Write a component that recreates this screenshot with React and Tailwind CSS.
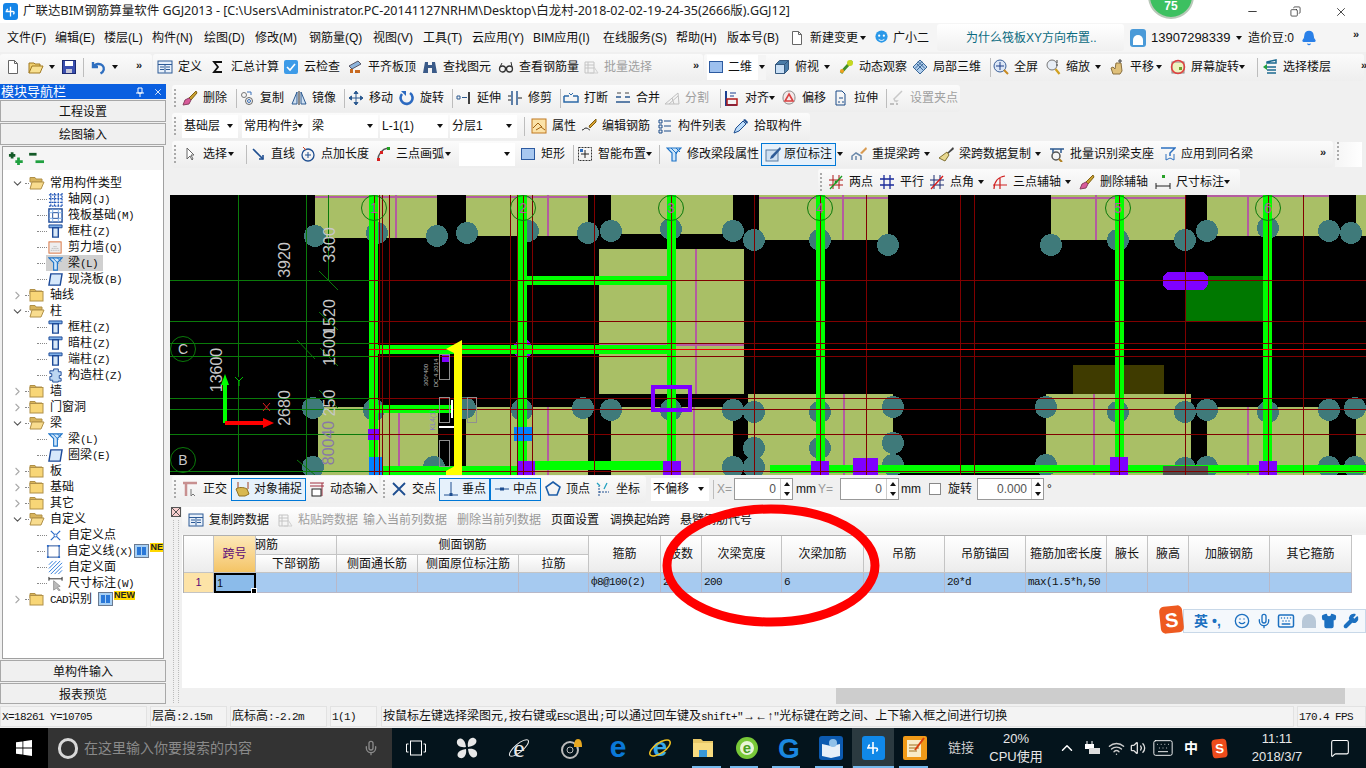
import React from 'react';
import clsx from 'clsx';
import { Bell, Mic, Wifi, Volume2, ChevronUp, ChevronDown, ChevronRight, MessageSquare, Keyboard, Shirt, Wrench, Smile, X, Minus, Copy } from 'lucide-react';

const B = '#2458b8', LB = '#7fb0e8';

const ICONS = {
  doc: <><path d="M3.5 1.5h6l3 3v10h-9z" fill="#fff" stroke="#666" /><path d="M9.5 1.5v3h3" stroke="#666" /></>,
  open: <><path d="M1 14V4h5l1 1h5v2" fill="#f0d070" stroke="#a07820" /><path d="M1 14l3-7h11l-3 7z" fill="#f8e090" stroke="#a07820" /></>,
  save: <><rect x="1.5" y="1.5" width="13" height="13" fill="#3a4fb0" stroke="#1c2a70" /><rect x="4" y="2" width="8" height="5" fill="#fff" /><rect x="5" y="10" width="6" height="4" fill="#c8c8d8" /></>,
  undo: <path d="M3 3v5h5M3.5 8C5 4.5 10 4 12.5 6.5s1.5 6-2 8" stroke="#2f6fc0" strokeWidth="2.4" />,
  define: <><rect x="1" y="2" width="14" height="12" fill="#e8f0fa" stroke="#2c5a96" /><path d="M1 5.5h14M3 8h4M3 10.5h4M9 8h4M9 10.5h4M8 5.5v8" stroke="#2c5a96" /></>,
  sigma: <path d="M12 3H4l4 5-4 5h8" stroke="#111" strokeWidth="1.8" />,
  cloud: <><rect x="1" y="1" width="14" height="14" rx="2" fill="#3d9be8" /><path d="M4 8l3 3 5-6" stroke="#fff" strokeWidth="1.6" /></>,
  plate: <><path d="M2 7l9-5 3 3-9 5z" fill="#8db4dc" stroke="#556" /><path d="M3 14h3v-4H3zM8 14h5v-3H8z" fill="#c86a20" /></>,
  binoc: <><path d="M3 3h3v3h4V3h3l2 11h-5V9H6v5H1z" fill="#3a5a88" /></>,
  glass: <><circle cx="4.5" cy="10" r="3" stroke="#333" strokeWidth="1.3" /><circle cx="11.5" cy="10" r="3" stroke="#333" strokeWidth="1.3" /><path d="M7 9h2M2 8l2-4M14 8l-1-5" stroke="#333" /></>,
  batch: <><path d="M2 3h9v11H2zM2 6h9M2 9h9M5 3v11" stroke="#c4c4c4" /><path d="M11 8l4 6H7" stroke="#d0d0d0" /></>,
  square: <rect x="1.5" y="2.5" width="13" height="11" fill="#9dc0ee" stroke="#2c5aa0" />,
  cube: <><path d="M1.5 5.5h9v9h-9z" fill="#c9dff5" stroke="#35597f" /><path d="M1.5 5.5l4-4h9l-4 4zM10.5 5.5l4-4v9l-4 4z" fill="#4a7ca8" stroke="#35597f" /></>,
  orbit: <><path d="M3 14C6 10 10 6 14 2" stroke="#3f8f28" strokeWidth="3" /><circle cx="12" cy="4" r="3" fill="#c6d820" /><circle cx="4" cy="12" r="2" fill="#f0a020" /></>,
  cube3: <path d="M8 1l7 7-7 7-7-7zM4 4l8 8M12 4l-8 8M6 2.500l7 7M10 2.500l-7 7" fill="#b0cdec" stroke="#3a6898" />,
  full: <><circle cx="7" cy="7" r="6" fill="#dbe6f6" stroke="#3a5f98" /><path d="M7 3v8M3 7h8" stroke="#1e3f88" /><path d="M11 11l4 4" stroke="#c88a20" strokeWidth="2" /></>,
  zoom: <><circle cx="7" cy="6" r="5" fill="#e8eef6" stroke="#777" /><path d="M10.500 10l4 5" stroke="#d0a020" strokeWidth="2.200" /><path d="M12 1v3M12 5v2" stroke="#444" /></>,
  pan: <><path d="M4 15l-2-6 2-1 2 2 1-6h5l1 8-2 3z" fill="#dfc07a" stroke="#8a7040" /><path d="M11 0v4M9 2h4" stroke="#444" /></>,
  rot: <><rect x="2" y="3" width="12" height="11" fill="#eef3c0" stroke="#888" /><circle cx="8" cy="8" r="6.500" stroke="#e04040" strokeWidth="1.500" /><rect x="9" y="8" width="3" height="3" fill="#70a030" /></>,
  layers: <><path d="M5 3l9-2v3H5zM5 8h9M5 11h9M5 14h9" stroke="#1c6a90" strokeWidth="1.500" /><path d="M1 8l4-3v6z" fill="#20a040" /></>,
  erase: <><path d="M14 1L7 8l2 2 6-7z" fill="#c8a030" stroke="#806010" /><path d="M7 8l-4 2-2 5 6-1 2-4z" fill="#d85a9a" stroke="#884060" /></>,
  copy: <><circle cx="5" cy="5" r="2.500" stroke="#777" /><circle cx="10" cy="11" r="3.500" stroke="#666" /><circle cx="10" cy="11" r="1.500" stroke="#3a70b8" /><path d="M8 2h4v3" stroke="#3a70b8" /></>,
  mirror: <><path d="M6 2L1 14h5zM10 2l5 12h-5z" stroke="#2c5a90" fill="#cfe0f2" /><path d="M8 1v14" stroke="#222" /></>,
  move: <path d="M8 1v14M1 8h14M8 1L6 3.500h4zM8 15l-2-2.500h4zM1 8l2.500-2v4zM15 8l-2.500-2v4z" stroke="#2c5a90" fill="#2c5a90" />,
  rotate: <><path d="M3 4a6 6 0 1 0 8-1" stroke="#2c6ac0" strokeWidth="2.600" /><path d="M2 1h5v5" fill="#2c6ac0" /></>,
  extend: <><path d="M1 6h3v3H1zM6 7.500h5" stroke="#2c5a90" /><path d="M13 2v12" stroke="#111" strokeWidth="1.600" /></>,
  trim: <><path d="M5 1v14M10 1v14" stroke="#2c5a90" strokeWidth="1.500" /><path d="M1 6h3M1 10h3M11 8h4" stroke="#222" /></>,
  brk: <><path d="M1 6h5M10 6h5M1 6v6h14V6" stroke="#2c6aa8" strokeWidth="1.500" /><path d="M6 3l2 2 2-2" stroke="#2c6aa8" /></>,
  merge: <><path d="M1 12h14M1 7h5M10 7h5" stroke="#2c5a90" strokeWidth="1.500" /><path d="M2 3h4M10 3h4" stroke="#444" /></>,
  split: <path d="M1 14h14L14 3zM5 14L14 6M8 8l2 6" stroke="#c0c0c0" />,
  align: <><path d="M2 1v14h11" stroke="#1a3f90" strokeWidth="2" /><rect x="3" y="9" width="10" height="6" stroke="#b01818" strokeWidth="1.500" /><path d="M6 3h6M6 6h4" stroke="#1a3f90" /></>,
  offset: <><path d="M8 1C4 1 2 4 2 8c0 4 3 6 6 6s6-2 6-6c0-4-2-7-6-7z" fill="#f4e8e8" stroke="#888" /><path d="M8 4l4 7H4z" stroke="#d84040" strokeWidth="1.600" /></>,
  stretch: <path d="M3 1h6l3 3v11H3zM5 12h2M9 12h2M6 8h4" stroke="#1a4a88" />,
  pin: <><path d="M13 1l-7 7-1 1 1 2h2l-1 1" stroke="#c8c8c8" strokeWidth="1.500" /><path d="M1 14h4M7 14h2" stroke="#c0c0c0" strokeWidth="2" /></>,
  attr: <><rect x="1" y="1" width="14" height="14" fill="#fbe2a8" stroke="#c07820" /><path d="M2 10l5-5 4 4M5 12l5-3 4 3" stroke="#a06010" /></>,
  edit: <><path d="M1 12c2 0 2-2 4-2s3 2 4 2" stroke="#222" /><path d="M15 1L8 8l1 2 6-6z" fill="#d8a030" stroke="#806010" /></>,
  list: <path d="M2 2h3v3H2zM2 7h3v3H2zM2 12h3v3H2zM7 3h7M7 8h7M7 13h7" stroke="#1a4a88" />,
  picker: <><path d="M1 15l2-5 7-7 3 3-7 7z" fill="#bcdcfa" stroke="#1e4e90" /><path d="M10 2l2-1 3 3-1 2z" fill="#1e4e90" /></>,
  cursor: <path d="M5 2v11l3-3 2 4 1-1-2-4h3z" fill="#fff" stroke="#666" />,
  line: <><path d="M3 3l10 10" stroke="#1e4e90" strokeWidth="1.600" /><path d="M9 13h4V9" stroke="#1e4e90" strokeWidth="1.600" /></>,
  plen: <><circle cx="8" cy="9" r="6" stroke="#1e4e90" strokeWidth="1.300" /><path d="M8 6v6M5 9h6" stroke="#1e4e90" /><path d="M3 1l3 3" stroke="#d04020" /></>,
  arc: <><path d="M3 14C3 8 7 3 13 2" stroke="#555" strokeWidth="1.500" /><rect x="2" y="12" width="3" height="3" fill="#d82020" /><rect x="5" y="5" width="3" height="3" fill="#d82020" /><rect x="12" y="1" width="3" height="3" fill="#20a020" /></>,
  rect: <rect x="1.500" y="2.500" width="13" height="11" fill="#a8c8f0" stroke="#2c5aa0" />,
  smart: <><rect x="1.500" y="1.500" width="13" height="13" stroke="#333" strokeDasharray="2 1" /><path d="M8 4v8M4 8h8" stroke="#222" /><rect x="3" y="3" width="3" height="3" fill="#3070c0" /></>,
  beam: <><path d="M1 2h14l-5 5v8H6V7z" fill="#cfe6fa" stroke="#1e74c8" strokeWidth="1.200" /><path d="M5 2l6 6M10 2l4 4" stroke="#1e74c8" /></>,
  inplace: <><rect x="1" y="4" width="12" height="11" fill="#cfe0f2" stroke="#5a7ca0" /><path d="M15 1L6 10l-1 3 3-1 8-9z" fill="#2f5c98" /></>,
  respan: <><path d="M1 14v-4l4-3 5 3v4M5 14v-4M10 14v-3" stroke="#6a88aa" strokeWidth="1.500" /><path d="M15 1l-6 6 2 1 5-5z" fill="#d89a50" /></>,
  broom: <><path d="M15 1L9 7l1 1 6-5z" fill="#444" /><path d="M9 6l2 3-4 6-6-3z" fill="#e8d890" stroke="#807030" /></>,
  ident: <><path d="M1 3h14M4 3v4M12 3v4" stroke="#2c5a90" strokeWidth="1.500" /><circle cx="7" cy="10" r="4" stroke="#555" strokeWidth="1.500" /><path d="M10 13l3 3" stroke="#b08020" strokeWidth="2" /></>,
  apply: <><path d="M1 2h14l-5 5v3" stroke="#2c70c0" strokeWidth="1.500" /><path d="M6 8v6l4-2 4 2V8" stroke="#2c70c0" /></>,
  two: <><path d="M1 6h14M1 11h14M5 1v14M11 1v14" stroke="#b01818" /><path d="M2 15L14 2" stroke="#1a9a20" strokeWidth="1.300" /><circle cx="8" cy="8" r="1.500" fill="#1a9a20" /></>,
  para: <path d="M1 5h14M1 11h14M5 1v14M11 1v14" stroke="#1a2a9a" strokeWidth="1.300" />,
  angle: <><path d="M1 6h14M1 11h14M5 1v14M11 1v14" stroke="#1a2a70" /><path d="M2 15L14 2" stroke="#d81818" strokeWidth="1.300" /></>,
  arcaux: <><path d="M2 15C2 8 6 3 13 2M1 11h14M8 4v11" stroke="#d02020" strokeWidth="1.200" /></>,
  dim: <><path d="M1 12h14M1 9v6M15 9v6" stroke="#222" /><rect x="7" y="1" width="3" height="3" fill="#28a028" /></>,
  ortho: <><path d="M1 2h14M4 2v13" stroke="#c89090" strokeWidth="2.500" /><path d="M9 8v7l2-2 2 2" stroke="#777" /></>,
  snap: <><path d="M3 1v7M13 1v7" stroke="#a04020" /><path d="M1 8c2-2 8-2 11 0l2 5-4 2H4z" fill="#d8b850" stroke="#907020" /></>,
  dyn: <><path d="M1 2h14M1 5h14M13 2v13" stroke="#a03040" /><rect x="3" y="8" width="9" height="7" fill="#fff" stroke="#222" /></>,
  inter: <path d="M2 2l12 12M14 2L2 14" stroke="#1e4e90" strokeWidth="1.800" />,
  perp: <><path d="M8 1v12M1 14h14" stroke="#1e4e90" /><rect x="6.500" y="12" width="3" height="3" fill="#1e4e90" /></>,
  mid: <><path d="M1 8h14" stroke="#1e4e90" /><rect x="6" y="6.500" width="4" height="3" fill="#1e4e90" /></>,
  vertex: <path d="M8 1l7 5-3 8H4L1 6z" stroke="#1e5ea8" strokeWidth="1.600" />,
  coord: <><path d="M4 15V5M4 11h10" stroke="#1e4e90" strokeDasharray="2 1" /><path d="M2 2l3 3M12 2L9 8" stroke="#20a0c0" strokeWidth="1.300" /></>,
};

const I = ({ n, cls = 'w-4 h-4' }) => <svg viewBox="0 0 16 16" fill="none" className={clsx(cls, 'shrink-0')}>{ICONS[n]}</svg>;
const Arrow = ({ cls }) => <svg viewBox="0 0 6 4" className={clsx('w-[6px] h-[4px] shrink-0', cls)}><path d="M0 0h6L3 4z" fill="#111" /></svg>;
const Sep = ({ w }) => <div className={clsx('flex items-center justify-center h-full shrink-0', w)}><div className="w-px h-[19px] bg-[#bdbdbd]" /></div>;
const Grip = () => <div className="w-[6px] h-[18px] ml-[2px] mr-[2px] shrink-0 border-l-2 border-dotted border-[#aaa]" />;
const More = ({ cls }) => <span className={clsx('text-[11px] leading-none font-bold text-[#222] self-start mt-[6px]', cls)}>»</span>;

// 一个工具按钮：宽度写死，图标后跟文字
const T = ({ i, t, w, a, g, on, pl = '' }) => (
  <div className={clsx('flex items-center h-full shrink-0', w, pl, g ? 'text-[#a0a0a0]' : 'text-[#111]')}>
    {on ? (
      <div className="flex items-center h-[23px] border border-[#0078d7] bg-[#e6f1fb] pl-[3px] pr-[3px]">
        <I n={i} /><span className="ml-[3px]">{t}</span>
      </div>
    ) : (
      <>{i && <I n={i} />}<span className="ml-[5px] whitespace-nowrap">{t}</span></>
    )}
    {a && <Arrow cls="ml-auto mr-[8px]" />}
  </div>
);

const Bar = ({ cls, children }) => <div className={clsx('flex items-center h-[27px] rounded-[3px] bg-gradient-to-b from-[#fbfbfb] to-[#eeeeee]', cls)}>{children}</div>;

const Combo = ({ t, w, ml = 'ml-[4px]' }) => (
  <div className={clsx('flex items-center justify-between h-[23px] bg-white pl-[2px] pr-[5px] shrink-0', w, ml)}>
    <span className="whitespace-nowrap overflow-hidden">{t}</span><Arrow />
  </div>
);

const Mono = ({ t, cls }) => (
  <span className={cls}>
    {t.split(/([\x00-\x7f]+)/).map((s, k) => (/[\x00-\x7f]/.test(s)
      ? <span key={k} className="text-[11px] tracking-[-0.6px] font-['Liberation_Mono',monospace]">{s}</span>
      : <span key={k}>{s}</span>))}
  </span>
);

const menus = [
  ['文件(F)', 'w-[48px]'], ['编辑(E)', 'w-[49px]'], ['楼层(L)', 'w-[48px]'], ['构件(N)', 'w-[52px]'], ['绘图(D)', 'w-[51px]'], ['修改(M)', 'w-[54px]'],
  ['钢筋量(Q)', 'w-[64px]'], ['视图(V)', 'w-[50px]'], ['工具(T)', 'w-[49px]'], ['云应用(Y)', 'w-[61px]'], ['BIM应用(I)', 'w-[70px]'], ['在线服务(S)', 'w-[73px]'], ['帮助(H)', 'w-[51px]'], ['版本号(B)', 'w-[62px]'],
];

const tree = [
  [0, 'open', '常用构件类型'], [1, 'grid', '轴网(J)'], [1, 'raft', '筏板基础(M)'], [1, 'col', '框柱(Z)'], [1, 'wall', '剪力墙(Q)'], [1, 'beam', '梁(L)', 'sel'], [1, 'slab', '现浇板(B)'],
  [0, 'closed', '轴线'], [0, 'open', '柱'], [1, 'col', '框柱(Z)'], [1, 'col', '暗柱(Z)'], [1, 'col', '端柱(Z)'], [1, 'gzz', '构造柱(Z)'],
  [0, 'closed', '墙'], [0, 'closed', '门窗洞'], [0, 'open', '梁'], [1, 'beam', '梁(L)'], [1, 'slab', '圈梁(E)'],
  [0, 'closed', '板'], [0, 'closed', '基础'], [0, 'closed', '其它'], [0, 'open', '自定义'], [1, 'xpt', '自定义点'], [1, 'xline', '自定义线(X)', 'new'], [1, 'hatch', '自定义面'], [1, 'dimc', '尺寸标注(W)'],
  [0, 'closed', 'CAD识别', 'new2'],
];

const TREE_ICONS = {
  grid: <path d="M1 3h14M1 7h14M1 11h14M1 15h14M3 1v14M7 1v14M11 1v14M15 1v14" stroke={B} strokeWidth="1.300" strokeDasharray="2 1" />,
  raft: <><rect x="1" y="1" width="14" height="14" stroke="#1d4a98" strokeWidth="1.500" /><rect x="5" y="5" width="6" height="6" stroke="#1d4a98" /><path d="M1 5h4M1 11h4M11 5h4M11 11h4M5 1v4M11 1v4M5 11v4M11 11v4" stroke={LB} /></>,
  col: <><path d="M1 1h14v3H1z" fill={LB} stroke="#1d4a98" /><path d="M5 4h6v10H5z" fill="#d8e8f8" stroke="#1d4a98" strokeWidth="1.500" /></>,
  wall: <><rect x="1" y="2" width="13" height="12" fill="#eee" stroke="#d8703a" /><path d="M3 11h9M4 9h7M6 7h4" stroke="#aaa" strokeDasharray="1 1" /></>,
  beam: ICONS.beam,
  slab: <path d="M3 2h12l-2 12H1z" fill="#d6e8fa" stroke="#1d4a98" strokeWidth="1.500" />,
  gzz: <path d="M6 1h5v3h3v4h-2v3h2v3h-3v1H5v-2H2V9h2V6H2V3h4z" fill="#bcd6f2" stroke="#1d4a98" />,
  xpt: <><path d="M3 3l10 10M13 3L3 13" stroke="#2a6ac8" strokeWidth="1.300" /><circle cx="8" cy="8" r="1.500" fill="#fff" stroke="#2a6ac8" /></>,
  xline: <><rect x="2" y="2" width="12" height="12" stroke="#1d4a98" /><path d="M1 1h2v2H1zM13 1h2v2h-2zM1 13h2v2H1zM13 13h2v2h-2z" fill="#2a6ac8" /></>,
  hatch: <path d="M1 5l4-4M1 9l8-8M1 13L13 1M3 15L15 3M7 15l8-8M11 15l4-4" stroke="#2a78d8" />,
  dimc: <><path d="M1 3h14M1 1v4M15 1v4" stroke="#222" /><path d="M6 5v10l3-2 3 3 1-1-3-3 3-1z" fill="#bbb" stroke="#999" /></>,
};

const Folder = ({ open }) => (
  <svg viewBox="0 0 16 14" className="w-[16px] h-[14px] shrink-0" fill="none">
    <path d="M1 3V1.500h5L7 3h6v3H1z" fill="#d8b45c" stroke="#b09048" />
    {open ? <path d="M3 6h12l-3 7H1z" fill="#f8dc8e" stroke="#b09048" /> : <rect x="1" y="3.500" width="13" height="9.500" fill="#f8d677" stroke="#b09048" />}
  </svg>
);

const NewTag = ({ t }) => (
  <span className="flex items-start ml-[2px]">
    <span className="w-[15px] h-[14px] border border-[#6a7a90] bg-[#a8d0f4] grid grid-cols-2 gap-[1px] p-[2px]"><i className="bg-[#2a78d8]" /><i className="bg-[#2a78d8]" /></span>
    <span className="bg-[#ffd800] text-[9px] leading-[9px] font-bold text-[#222] font-['Liberation_Sans',sans-serif] ml-[1px] -mt-[1px] overflow-hidden">{t}</span>
  </span>
);

const TreeRow = ({ r }) => {
  const [lv, ic, t, ex] = r;
  const open = ic === 'open';
  if (lv === 0) return (
    <div className="relative flex items-center h-[16px] pl-[8px]">
      {open ? <ChevronDown size={13} className="text-[#555] shrink-0" /> : <ChevronRight size={13} className="text-[#aaa] shrink-0" />}
      <div className="w-[4px] ml-[1px] border-t border-dotted border-[#888]" />
      <Folder open={open} />
      <Mono t={t} cls="ml-[5px] whitespace-nowrap" />
      {ex === 'new2' && <span className="ml-[4px] -mt-[1px]"><NewTag t="NEW" /></span>}
    </div>
  );
  return (
    <div className="relative flex items-center h-[16px] pl-[34px]">
      <div className="w-[10px] border-t border-dotted border-[#888] mr-[1px]" />
      <svg viewBox="0 0 16 16" fill="none" className="w-[15px] h-[15px] shrink-0 relative z-10">{TREE_ICONS[ic]}</svg>
      <Mono t={t} cls={clsx('ml-[5px] whitespace-nowrap relative z-10')} />
      {ex === 'sel' && <div className="absolute left-[43px] w-[57px] h-[16px] bg-[#d0d0d0]" />}
      {ex === 'new' && <NewTag t="NE" />}
    </div>
  );
};

const plates = [
  [145, 0, 122, 43], [296, 0, 122, 41], [441, 0, 122, 39], [589, 0, 129, 45], [881, 0, 135, 45], [1037, 0, 122, 41], [1186, 0, 10, 41],
  [429, 54, 145, 145], [148, 212, 120, 68], [296, 212, 122, 68], [441, 212, 122, 68], [578, 199, 145, 81], [876, 199, 145, 81], [1037, 212, 122, 68], [1186, 212, 10, 68],
];
const dots = [
  [145, 41], [207, 38], [267, 41], [297, 38], [358, 36], [418, 38], [441, 36], [501, 34], [563, 36], [584, 45], [650, 45], [718, 50], [881, 50], [948, 45], [1015, 45], [1037, 36], [1098, 33], [1159, 36], [1181, 38],
  [143, 213], [204, 215], [295, 213], [352, 215], [413, 213], [441, 215], [501, 215], [563, 215], [584, 217], [584, 253], [143, 272], [264, 272], [563, 272], [584, 272], [650, 217], [723, 212], [876, 212], [948, 217], [1015, 217], [1037, 215], [1098, 217], [1159, 215], [1185, 213], [650, 253], [723, 248], [723, 270], [876, 270], [1015, 273], [1037, 272], [1159, 272], [1185, 272],
];
const pinks = [[226, 0, 226, 43], [378, 0, 378, 41], [526, 54, 526, 199], [229, 212, 229, 280], [378, 212, 378, 280], [524, 212, 524, 280], [673, 0, 673, 45], [926, 0, 926, 45], [1078, 0, 1078, 41], [674, 199, 674, 280], [924, 199, 924, 280], [1078, 212, 1078, 280], [429, 150, 574, 150], [145, 2, 267, 2], [296, 2, 418, 2], [589, 3, 718, 3], [881, 3, 1016, 3], [1037, 1, 1159, 1]];
const hRed = [85, 126, 148, 161, 203, 214, 239, 276];
const vRed = [204, 209, 212, 219, 340, 347, 353, 362, 424, 501, 584, 650, 696, 790, 804, 949, 1015, 1098, 1133];
const bubbles = [[204, '1'], [353, '2'], [501, '3'], [650, '4'], [948, '5'], [1098, '6']];
const nums = [['3920', 114, 65], ['3300', 159, 50], ['1520', 159, 122], ['1500', 159, 153], ['250', 159, 208], ['2680', 114, 213], ['13600', 46, 175]];
const blocks = [[198, 234, 11, 11, '#7f00ff'], [344, 232, 18, 14, '#0080ff'], [199, 262, 13, 18, '#0080ff'], [347, 266, 18, 14, '#7f00ff'], [493, 266, 18, 14, '#7f00ff'], [641, 266, 18, 14, '#7f00ff'], [683, 263, 25, 17, '#7f00ff'], [940, 262, 18, 18, '#7f00ff'], [1089, 266, 18, 14, '#7f00ff'], [993, 271, 45, 9, '#505050']];

const Canvas = () => (
  <div className="h-[280px] bg-black shrink-0 overflow-hidden">
    <svg width="1196" height="280" viewBox="0 0 1196 280" shapeRendering="crispEdges" className="block">
      {plates.map((p, k) => <rect key={k} x={p[0]} y={p[1]} width={p[2]} height={p[3]} fill="#a9bf66" />)}
      <rect x="903" y="170" width="91" height="29" fill="#3f3b00" />
      <rect x="1016" y="81" width="77" height="45" fill="#007800" />
      {dots.map((d, k) => <circle key={k} cx={d[0]} cy={d[1]} r="11" fill="#3f7a7a" />)}
      {pinks.map((l, k) => <line key={k} x1={l[0]} y1={l[1]} x2={l[2]} y2={l[3]} stroke="#b45ca0" strokeWidth="1.500" />)}
      {[199, 348, 497, 646, 945, 1093].map((x) => <rect key={x} x={x} y="0" width="9" height="280" fill="#00ff00" />)}
      <rect x="199" y="150" width="307" height="9" fill="#00ff00" />
      <rect x="357" y="81" width="144" height="9" fill="#00ff00" />
      <rect x="208" y="210" width="73" height="8" fill="#00ff00" />
      <rect x="208" y="271" width="140" height="9" fill="#00ff00" />
      <rect x="365" y="266" width="130" height="9" fill="#00ff00" />
      <rect x="600" y="270" width="596" height="8" fill="#00ff00" />
      <path d="M341 154l7-9h10l7 9-7 9h-10z" fill="#7f00ff" />
      <rect x="348" y="145" width="9" height="18" fill="#00ff00" /><rect x="341" y="150" width="24" height="9" fill="#00ff00" />
      <rect x="272" y="160" width="8" height="7" fill="#7f00ff" />
      {blocks.map((b, k) => <rect key={k} x={b[0]} y={b[1]} width={b[2]} height={b[3]} fill={b[4]} />)}
      <rect x="993" y="77" width="45" height="18" rx="7" fill="#7f00ff" />
      {[68, 136, 158].map((x) => <line key={x} x1={x} y1="0" x2={x} y2={x === 158 ? 85 : 280} stroke="#0a7a0a" />)}
      {hRed.map((y) => <line key={y} x1="0" y1={y} x2="199" y2={y} stroke="#0a7a0a" />)}
      {hRed.map((y) => <line key={y} x1="199" y1={y} x2="1196" y2={y} stroke="#800000" />)}
      {vRed.map((x) => <line key={x} x1={x} y1="0" x2={x} y2="280" stroke="#800000" />)}
      <line x1="199" y1="154.500" x2="1196" y2="154.500" stroke="#f00000" />
      {[[149, 76, 168, 95], [127, 145, 145, 164], [149, 117, 168, 135], [150, 153, 168, 171], [149, 195, 168, 213], [127, 265, 145, 280]].map((l, k) => <line key={k} x1={l[0]} y1={l[1]} x2={l[2]} y2={l[3]} stroke="#0a7a0a" shapeRendering="auto" />)}
      <g shapeRendering="auto">
        {bubbles.map(([x, t]) => (
          <g key={t}>
            <circle cx={x} cy="13" r="12.500" fill="none" stroke="#0a7a0a" />
            <text x={x} y="18" textAnchor="middle" fontSize="14" fill="#b45ca0" fontFamily="Liberation Sans">{t}</text>
          </g>
        ))}
        {[['C', 154], ['B', 265]].map(([t, y]) => (
          <g key={t}>
            <circle cx="13" cy={y} r="12.500" fill="none" stroke="#0a7a0a" />
            <text x="13" y={y + 5} textAnchor="middle" fontSize="14" fill="#c8c8c8" fontFamily="Liberation Sans">{t}</text>
          </g>
        ))}
        {nums.map(([t, x, y]) => <text key={t} transform={`translate(${x + 6} ${y}) rotate(-90)`} textAnchor="middle" fontSize="16" fill="#c8c8c8" fontFamily="Liberation Sans">{t}</text>)}
        <text transform="translate(164 248) rotate(-90)" textAnchor="middle" fontSize="16" fill="#8878a8" fontFamily="Liberation Sans">80040</text>
        <text transform="translate(258 180) rotate(-90)" textAnchor="middle" fontSize="6" fill="#bbb" fontFamily="Liberation Sans">300*400</text>
        <text transform="translate(268 178) rotate(-90)" textAnchor="middle" fontSize="6" fill="#bbb" fontFamily="Liberation Sans">DC 4.2014</text>
        <text transform="translate(265 225) rotate(-90)" textAnchor="middle" fontSize="7" fill="#8878c8" fontFamily="Liberation Sans">KL4(1)</text>
        <path d="M93 208l7 8M100 208l-7 8" stroke="#e02020" />
        <path d="M65 182l4 4 4-4M69 186v5" stroke="#00c000" />
      </g>
      <rect x="53" y="190" width="4" height="38" fill="#00ff00" /><path d="M55 179l-4 11h8z" fill="#00ff00" shapeRendering="auto" />
      <rect x="55" y="226" width="40" height="4" fill="#ff0000" /><path d="M104 228l-11-5v10z" fill="#ff0000" shapeRendering="auto" />
      {[[269, 159, 10, 25], [269, 202, 10, 25], [297, 202, 9, 25], [269, 245, 10, 26]].map((b, k) => <rect key={k} x={b[0]} y={b[1]} width={b[2]} height={b[3]} fill="none" stroke="#909090" />)}
      <rect x="269" y="231" width="15" height="2" fill="#fff" /><rect x="281" y="205" width="2" height="18" fill="#fff" />
      <rect x="284" y="150" width="8" height="130" fill="#ffff00" />
      <path d="M276 154l16-9v17zM276 276l16-9v13h-16z" fill="#ffff00" shapeRendering="auto" />
      <rect x="483" y="192" width="37" height="23" fill="none" stroke="#7f00ff" strokeWidth="4" />
    </svg>
  </div>
);

const hd = 'border-r border-b border-[#c4c4c4] bg-gradient-to-b from-white to-[#ececec] flex items-center justify-center';
const td = 'border-r border-b border-[#b8b8c8] flex items-center pl-[2px] overflow-hidden whitespace-nowrap';
const cols = [['箍筋'], ['肢数'], ['次梁宽度'], ['次梁加筋'], ['吊筋'], ['吊筋锚固'], ['箍筋加密长度'], ['腋长'], ['腋高'], ['加腋钢筋'], ['其它箍筋']];
const vals = ['ф8@100(2)', '2', '200', '6', '0', '20*d', 'max(1.5*h,50', '', '', '', ''];

const SpecTable = () => (
  <div className="grid ml-[1px] w-fit grid-cols-[30px_42px_81px_81px_101px_70px_72px_41px_80px_82px_81px_81px_81px_41px_41px_81px_82px] grid-rows-[19px_18px_20px] border-t border-l border-[#b0b0b0]">
    <div className={clsx(hd, 'row-span-2')} />
    <div className="row-span-2 border-r border-b border-[#c4c4c4] bg-gradient-to-b from-[#fde8b8] to-[#f4c464] text-[#5a0a78] flex items-center justify-center">跨号</div>
    <div className={clsx(hd, '!justify-start overflow-hidden')}><span className="-ml-[2px] whitespace-nowrap">钢筋</span></div>
    <div className={clsx(hd, 'col-span-3')}>侧面钢筋</div>
    {cols.map(([c]) => <div key={c} className={clsx(hd, 'row-span-2 whitespace-nowrap')}>{c}</div>)}
    <div className={hd}>下部钢筋</div>
    <div className={hd}>侧面通长筋</div>
    <div className={clsx(hd, 'whitespace-nowrap')}>侧面原位标注筋</div>
    <div className={hd}>拉筋</div>
    <div className="border-r border-b border-[#c4c4c4] bg-[#fde3a7] text-[#5a0a78] flex items-center justify-center text-[11px]">1</div>
    <div className="relative border-2 border-black bg-[#8bbbea] flex items-center pl-[1px] text-[11px]">1<span className="absolute -right-[3px] -bottom-[3px] w-[4px] h-[4px] bg-black border border-white box-content" /></div>
    {['', '', '', ''].map((v, k) => <div key={k} className={clsx(td, 'bg-[#a6caf0]')}>{v}</div>)}
    {vals.map((v, k) => <div key={k} className={clsx(td, 'bg-[#a6caf0] text-[11px] tracking-[-0.6px] font-["Liberation_Mono",monospace]')}>{v}</div>)}
  </div>
);

const Spin = ({ v, w }) => (
  <div className={clsx('flex items-center justify-end h-[22px] border border-[#999] bg-white shrink-0', w)}>
    <span className="mr-[4px] text-[12px] text-[#555]">{v}</span>
    <div className="flex flex-col w-[12px] h-full border-l border-[#ccc] items-center justify-around"><Arrow cls="rotate-180" /><Arrow /></div>
  </div>
);

const Status = ({ w, t, cls }) => <div className={clsx('flex items-center h-[21px] pl-[1px] border border-[#e2e2e2] bg-[#f3f3f3] shrink-0 overflow-hidden whitespace-nowrap', w, cls)}><Mono t={t} /></div>;

const TaskIcon = ({ w = 'w-[24px]', children }) => <svg viewBox="0 0 24 24" fill="none" className={clsx('h-[24px] shrink-0', w)}>{children}</svg>;

const navBtn = 'flex items-center justify-center pt-[2px] border border-[#a8a8a8] bg-[#f0f0f0] shrink-0';

export default function App() {
  return (
    <div className="relative w-[1366px] h-[768px] overflow-hidden bg-[#f0f0f0] flex flex-col text-[12px] text-[#111] font-['Liberation_Sans','Noto_Sans_CJK_SC',sans-serif]">
      {/* 标题栏 */}
      <div className="flex items-center h-[23px] bg-white shrink-0 pl-[3px]">
        <div className="flex items-center justify-center w-[15px] h-[17px] rounded-[3px] bg-[#1585e8] text-white">
          <svg viewBox="0 0 16 16" className="w-[13px] h-[13px]" fill="none"><path d="M8 2v12M2 8h9c2 0 2 3 0 3M5 5c-2 0-2 3 0 3" stroke="#fff" strokeWidth="1.600" /></svg>
        </div>
        <span className="ml-[5px] text-[12.5px] text-[#222] whitespace-nowrap font-['Noto_Sans','Noto_Sans_CJK_SC',sans-serif]">广联达BIM钢筋算量软件 GGJ2013 - [C:\Users\Administrator.PC-20141127NRHM\Desktop\白龙村-2018-02-02-19-24-35(2666版).GGJ12]</span>
        <div className="ml-auto flex items-center">
          <Minus size={13} strokeWidth={1.6} className="text-[#222] mr-[31px]" />
          <Copy size={11} strokeWidth={1.6} className="text-[#222] mr-[33px] -scale-x-100" />
          <X size={14} strokeWidth={1.4} className="text-[#222] mr-[18px]" />
        </div>
      </div>

      {/* 菜单栏 */}
      <div className="flex items-center h-[29px] shrink-0 pl-[7px] bg-[#f5f5f5]">
        {menus.map(([t, w]) => <span key={t} className={clsx('shrink-0 whitespace-nowrap', w)}>{t}</span>)}
        <T i="doc" t="新建变更" w="w-[85px]" a />
        <svg viewBox="0 0 16 16" className="w-[15px] h-[15px] shrink-0"><circle cx="8" cy="7" r="6.500" fill="#2a98e8" /><circle cx="5.500" cy="6" r="1.200" fill="#fff" /><circle cx="10.500" cy="6" r="1.200" fill="#fff" /><path d="M5 10c2 1.500 4 1.500 6 0" stroke="#fff" fill="none" /></svg>
        <span className="ml-[4px] w-[44px] shrink-0">广小二</span>
        <div className="flex items-center h-[27px] w-[187px] pl-[29px] rounded-[3px] bg-gradient-to-b from-white to-[#f0f0f0] text-[#0a6a80] shrink-0">为什么筏板XY方向布置..</div>
        <div className="ml-[6px] w-[16px] h-[18px] rounded-[3px] bg-[#4a9ad8] flex items-end justify-center shrink-0"><div className="w-[10px] h-[10px] rounded-t-full bg-white mb-[2px]" /></div>
        <span className="ml-[5px] text-[13px] w-[85px] shrink-0">13907298339</span>
        <Arrow />
        <span className="ml-[6px] w-[53px] shrink-0 whitespace-nowrap">造价豆:0</span>
        <Bell size={16} fill="#2a80e8" className="text-[#2a80e8] shrink-0" />
        <More cls="ml-[36px]" />
      </div>

      {/* 工具栏 1 */}
      <div className="flex items-center h-[32px] shrink-0 pb-[2px]">
        <Bar cls="w-[152px] pl-[5px]">
          <I n="doc" />
          <I n="open" cls="w-4 h-4 ml-[7px]" /><Arrow cls="ml-[5px]" />
          <I n="save" cls="w-4 h-4 ml-[6px]" />
          <Sep w="w-[13px]" />
          <I n="undo" /><Arrow cls="ml-[6px]" />
          <More cls="ml-[18px]" />
        </Bar>
        <Bar cls="w-[550px] ml-[1px] pl-[4px]">
          <T i="define" t="定义" w="w-[53px]" />
          <T i="sigma" t="汇总计算" w="w-[73px]" />
          <T i="cloud" t="云检查" w="w-[64px]" />
          <T i="plate" t="平齐板顶" w="w-[75px]" />
          <T i="binoc" t="查找图元" w="w-[76px]" />
          <T i="glass" t="查看钢筋量" w="w-[85px]" />
          <T i="batch" t="批量选择" w="w-[70px]" g />
          <More cls="ml-[40px]" />
        </Bar>
        <Bar cls="w-[660px] ml-[1px] pl-[3px]">
          <div className="flex items-center h-[25px] w-[51px] bg-white pl-[1px] shrink-0"><I n="square" /><span className="ml-[4px]">二维</span></div>
          <div className="flex items-center justify-center w-[8px] h-[25px] bg-[#f5f5f5] mr-[8px] shrink-0"><Arrow /></div>
          <T i="cube" t="俯视" w="w-[64px]" a />
          <T i="orbit" t="动态观察" w="w-[74px]" />
          <T i="cube3" t="局部三维" w="w-[75px]" />
          <Sep w="w-[6px]" />
          <T i="full" t="全屏" w="w-[52px]" />
          <T i="zoom" t="缩放" w="w-[64px]" a />
          <T i="pan" t="平移" w="w-[61px]" a />
          <T i="rot" t="屏幕旋转" w="w-[83px]" a />
          <Sep w="w-[9px]" />
          <T i="layers" t="选择楼层" w="w-[80px]" />
          <More cls="ml-[19px]" />
        </Bar>
      </div>

      {/* 主体 */}
      <div className="flex h-[620px] shrink-0">
        {/* 左侧导航 */}
        <div className="w-[166px] mr-[4px] flex flex-col shrink-0 font-['Liberation_Sans','Noto_Sans_CJK_SC',sans-serif]">
          <div className="flex items-center h-[15px] mb-[1px] bg-[#0a5fe0] text-white pl-[1px] shrink-0">
            <span className="text-[13px] leading-none">模块导航栏</span>
            <svg viewBox="0 0 10 10" className="ml-auto w-[10px] h-[10px]" fill="none" stroke="#fff"><path d="M3 1h4v5H3zM1 6h8M5 6v4" /></svg>
            <X size={10} className="ml-[8px] mr-[3px] text-white" />
          </div>
          <div className={clsx(navBtn, 'h-[22px] mb-[1px]')}>工程设置</div>
          <div className={clsx(navBtn, 'h-[22px] mb-[1px]')}>绘图输入</div>
          <div className="flex-1 mx-[2px] border border-[#a0a0a0] flex flex-col min-h-0">
            <div className="h-[23px] flex items-center pl-[3px] bg-[#f5f5f5] shrink-0">
              <svg viewBox="0 0 36 16" className="w-[42px] h-[17px]" fill="none" strokeWidth="2.600"><path d="M4 2v6M1 5h6" stroke="#145a28" /><path d="M10 7v7M7 11h7" stroke="#20a040" /><path d="M20 4h7" stroke="#145a28" /><path d="M26 11h8" stroke="#20a040" /></svg>
            </div>
            <div className="flex-1 bg-white pt-[5px] min-h-0 relative">
              {tree.map((r, k) => <TreeRow key={k} r={r} />)}
            </div>
          </div>
          <div className={clsx(navBtn, 'h-[22px] mt-[1px]')}>单构件输入</div>
          <div className={clsx(navBtn, 'h-[21px] mt-[1px]')}>报表预览</div>
        </div>

        {/* 右侧 */}
        <div className="flex-1 min-w-0 flex flex-col">
          <div className="h-[28px] flex items-center shrink-0 pl-[2px]">
            <Bar cls="w-[788px]">
              <Grip />
              <T i="erase" t="删除" w="w-[51px]" pl="pl-0" />
              <Sep w="w-[6px]" />
              <T i="copy" t="复制" w="w-[52px]" />
              <T i="mirror" t="镜像" w="w-[50px]" />
              <Sep w="w-[7px]" />
              <T i="move" t="移动" w="w-[51px]" />
              <T i="rotate" t="旋转" w="w-[50px]" />
              <Sep w="w-[7px]" />
              <T i="extend" t="延伸" w="w-[51px]" />
              <T i="trim" t="修剪" w="w-[50px]" />
              <Sep w="w-[6px]" />
              <T i="brk" t="打断" w="w-[52px]" />
              <T i="merge" t="合并" w="w-[49px]" />
              <T i="split" t="分割" w="w-[52px]" g />
              <Sep w="w-[8px]" />
              <T i="align" t="对齐" w="w-[57px]" a />
              <T i="offset" t="偏移" w="w-[52px]" />
              <T i="stretch" t="拉伸" w="w-[50px]" />
              <Sep w="w-[6px]" />
              <T i="pin" t="设置夹点" w="w-[72px]" g />
            </Bar>
          </div>
          <div className="h-[28px] flex items-center shrink-0 pl-[2px]">
            <Bar cls="w-[638px]">
              <Grip />
              <Combo t="基础层" w="w-[56px]" ml="ml-0" />
              <Combo t="常用构件类型" w="w-[66px]" />
              <Combo t="梁" w="w-[68px]" ml="ml-[2px]" />
              <Combo t="L-1(1)" w="w-[68px]" ml="ml-[2px]" />
              <Combo t="分层1" w="w-[67px]" ml="ml-[2px]" />
              <Sep w="w-[14px]" />
              <T i="attr" t="属性" w="w-[50px]" />
              <T i="edit" t="编辑钢筋" w="w-[76px]" />
              <T i="list" t="构件列表" w="w-[76px]" />
              <T i="picker" t="拾取构件" w="w-[68px]" />
            </Bar>
          </div>
          <div className="h-[28px] flex items-center shrink-0 pl-[2px]">
            <Bar cls="w-[1161px]">
              <Grip />
              <T i="cursor" t="选择" w="w-[60px]" a />
              <Sep w="w-[8px]" />
              <T i="line" t="直线" w="w-[50px]" />
              <T i="plen" t="点加长度" w="w-[75px]" />
              <T i="arc" t="三点画弧" w="w-[84px]" a />
              <Combo t="" w="w-[56px]" ml="ml-0" />
              <div className="w-[5px] shrink-0" />
              <T i="rect" t="矩形" w="w-[50px]" />
              <Sep w="w-[7px]" />
              <T i="smart" t="智能布置" w="w-[82px]" a />
              <div className="w-[7px] flex justify-start shrink-0"><div className="w-px h-[19px] bg-[#bdbdbd]" /></div>
              <T i="beam" t="修改梁段属性" w="w-[95px]" />
              <T t="原位标注" i="inplace" w="w-[90px]" on a />
              <T i="respan" t="重提梁跨" w="w-[87px]" a />
              <T i="broom" t="梁跨数据复制" w="w-[111px]" a />
              <T i="ident" t="批量识别梁支座" w="w-[111px]" />
              <T i="apply" t="应用到同名梁" w="w-[100px]" />
              <More cls="ml-[60px]" />
            </Bar>
            <div className="ml-[2px] w-[27px] h-[25px] bg-gradient-to-r from-[#f5f5f5] to-white"><Grip /></div>
          </div>
          <div className="h-[27px] flex items-center shrink-0 pl-[648px]">
            <Bar cls="w-[422px] !h-[26px]">
              <Grip />
              <T i="two" t="两点" w="w-[51px]" pl="ml-0" />
              <T i="para" t="平行" w="w-[50px]" />
              <T i="angle" t="点角" w="w-[63px]" a />
              <T i="arcaux" t="三点辅轴" w="w-[87px]" a />
              <T i="erase" t="删除辅轴" w="w-[76px]" />
              <T i="dim" t="尺寸标注" w="w-[83px]" a />
            </Bar>
          </div>

          <Canvas />

          {/* 捕捉工具栏 */}
          <div className="h-[28px] flex items-center shrink-0 pl-[2px]">
            <Bar cls="w-[207px]">
              <Grip />
              <T i="ortho" t="正交" w="w-[49px]" />
              <T i="snap" t="对象捕捉" w="w-[78px]" on />
              <T i="dyn" t="动态输入" w="w-[70px]" />
            </Bar>
            <Bar cls="w-[265px] ml-[2px]">
              <Grip />
              <T i="inter" t="交点" w="w-[48px]" />
              <T i="perp" t="垂点" w="w-[51px]" on />
              <T i="mid" t="中点" w="w-[55px]" on />
              <T i="vertex" t="顶点" w="w-[50px]" />
              <T i="coord" t="坐标" w="w-[50px]" />
            </Bar>
            <Combo t="不偏移" w="w-[58px]" ml="ml-[5px]" />
            <Sep w="w-[8px]" />
            <span className="text-[#999] w-[17px] shrink-0">X=</span>
            <Spin v="0" w="w-[59px]" />
            <span className="ml-[3px] w-[22px] shrink-0">mm</span>
            <span className="text-[#999] w-[22px] shrink-0">Y=</span>
            <Spin v="0" w="w-[59px]" />
            <span className="ml-[2px] w-[28px] shrink-0">mm</span>
            <div className="w-[12px] h-[12px] border border-[#888] bg-white shrink-0" />
            <span className="ml-[7px] w-[29px] shrink-0">旋转</span>
            <Spin v="0.000" w="w-[67px]" />
            <span className="ml-[3px]">°</span>
          </div>

          {/* 属性面板 */}
          <div className="flex-1 min-h-0 flex">
            <div className="w-[12px] shrink-0 flex flex-col items-center pt-[4px]">
              <svg viewBox="0 0 10 10" className="w-[10px] h-[10px]" fill="#f8d0d0" stroke="#555"><rect x="0.500" y="0.500" width="9" height="9" /><path d="M1 1l8 8M9 1L1 9" /></svg>
              <div className="w-[6px] flex-1 mt-[3px] mb-[1px] border-x border-dotted border-[#bbb]" />
            </div>
            <div className="flex-1 min-w-0 flex flex-col">
              <div className="h-[26px] mt-[4px] flex items-center shrink-0 pl-[6px] bg-gradient-to-b from-white to-[#eeeeee]">
                <T i="define" t="复制跨数据" w="w-[89px]" />
                <T i="batch" t="粘贴跨数据" w="w-[86px]" g />
                <span className="w-[94px] text-[#999] shrink-0">输入当前列数据</span>
                <span className="w-[94px] text-[#999] shrink-0">删除当前列数据</span>
                <span className="w-[59px] shrink-0">页面设置</span>
                <span className="w-[70px] shrink-0">调换起始跨</span>
                <span className="shrink-0">悬臂钢筋代号</span>
              </div>
              <div className="flex-1 min-h-0 bg-white mt-[2px]">
                <SpecTable />
              </div>
              <div className="h-[16px] bg-[#f0f0f0] flex shrink-0"><div className="ml-[654px] w-[509px] bg-[#cdcdcd]" /></div>
            </div>
          </div>
        </div>
      </div>

      {/* 状态栏 */}
      <div className="flex items-center gap-[3px] h-[24px] shrink-0">
        <Status w="w-[147px]" t="X=18261 Y=10705" />
        <Status w="w-[77px]" t="层高:2.15m" />
        <Status w="w-[97px]" t="底标高:-2.2m" />
        <Status w="w-[47px]" t="1(1)" />
        <Status w="w-[913px]" cls="ml-[1px]" t={'按鼠标左键选择梁图元,按右键或ESC退出;可以通过回车键及shift+"→←↑"光标键在跨之间、上下输入框之间进行切换'} />
        <Status w="w-[69px]" t="170.4 FPS" />
      </div>

      {/* 任务栏 */}
      <div className="flex items-center h-[40px] flex-1 bg-[#04141c] text-white">
        <div className="w-[48px] h-full bg-black flex items-center justify-center shrink-0">
          <svg viewBox="0 0 16 16" className="w-[16px] h-[16px]" fill="#fff"><path d="M0 2.300l6.500-.9v6.200H0zM7.300 1.300L16 0v7.600H7.300zM0 8.400h6.500v6.200L0 13.700zM7.300 8.400H16V16l-8.700-1.200z" /></svg>
        </div>
        <div className="w-[344px] h-full bg-[#333] flex items-center pl-[10px] shrink-0">
          <div className="w-[20px] h-[21px] rounded-full border-[3px] border-[#d8d8d8] shrink-0" />
          <span className="ml-[6px] text-[14px] text-[#8a8a8a]">在这里输入你要搜索的内容</span>
          <Mic size={16} className="ml-[111px] text-[#8a8a8a]" />
        </div>
        <svg viewBox="0 0 20 16" className="ml-[14px] w-[20px] h-[16px] shrink-0" fill="none" stroke="#fff"><rect x="4.500" y="1" width="11" height="14" /><path d="M2.500 4H.5v8h2M17.500 4h2v8h-2" /></svg>
        <TaskIcon w="w-[24px] ml-[29px]"><path d="M11 11C5 12 1 9 2 5s8-4 9 6zM13 11c-1-6 2-10 6-9s4 8-6 9zM13 13c6-1 10 2 9 6s-8 4-9-6zM11 13c1 6-2 10-6 9s-4-8 6-9z" fill="#e8e8e8" /></TaskIcon>
        <TaskIcon w="w-[24px] ml-[28px]"><text x="12" y="21" textAnchor="middle" fontSize="26" fill="#e8e8e8" fontFamily="Liberation Serif">e</text><ellipse cx="12" cy="12" rx="12" ry="4" transform="rotate(-40 12 12)" stroke="#e8e8e8" /></TaskIcon>
        <TaskIcon w="w-[28px] ml-[26px]"><circle cx="11" cy="14" r="8" stroke="#bbb" strokeWidth="2" /><circle cx="11" cy="14" r="3" stroke="#bbb" /><path d="M15 11c0-5 1-8 4-8s4 3 4 8z" fill="#e8a820" /></TaskIcon>
        <TaskIcon w="w-[24px] ml-[21px]"><text x="12" y="21" textAnchor="middle" fontSize="30" fontWeight="700" fill="#0a78d8" fontFamily="Liberation Sans">e</text></TaskIcon>
        <TaskIcon w="w-[24px] ml-[18px]"><text x="12" y="20" textAnchor="middle" fontSize="26" fontWeight="700" fill="#38a8e8" fontFamily="Liberation Sans">e</text><ellipse cx="12" cy="12" rx="12" ry="5" transform="rotate(-35 12 12)" stroke="#f0c020" strokeWidth="1.500" /></TaskIcon>
        <TaskIcon w="w-[24px] ml-[19px]"><path d="M2 3h8l2 2h10v6H2z" fill="#e8c868" /><path d="M2 7h20v14H2z" fill="#f8dc80" /><path d="M8 14h8v7H8z" fill="#3898d8" /></TaskIcon>
        <TaskIcon w="w-[24px] ml-[20px]"><circle cx="12" cy="12" r="11" fill="#78c838" /><circle cx="12" cy="12" r="7" fill="#e8f4d8" /><text x="12" y="17" textAnchor="middle" fontSize="15" fontWeight="700" fill="#48a020" fontFamily="Liberation Sans">e</text></TaskIcon>
        <TaskIcon w="w-[24px] ml-[18px]"><text x="12" y="22" textAnchor="middle" fontSize="28" fontWeight="700" fill="#1a88e0" fontFamily="Liberation Sans">G</text></TaskIcon>
        <TaskIcon w="w-[24px] ml-[18px]"><rect x="0" y="0" width="24" height="24" rx="3" fill="#0c5ab0" /><path d="M3 8l9 2 9-2v12l-9 2-9-2z" fill="#e8f0f8" /><circle cx="14" cy="7" r="4" fill="#90c0e8" /></TaskIcon>
        <div className="w-[42px] h-full ml-[9px] bg-[#2b3a40] flex items-center justify-center shrink-0">
          <div className="w-[23px] h-[24px] rounded-[3px] bg-[#1088e8] flex items-center justify-center"><svg viewBox="0 0 16 16" className="w-[16px] h-[16px]" fill="none"><path d="M8 2v12M2 8h9c2 0 2 3 0 3M5 5c-2 0-2 3 0 3" stroke="#fff" strokeWidth="1.600" /></svg></div>
        </div>
        <TaskIcon w="w-[24px] ml-[9px]"><rect x="0" y="0" width="24" height="24" rx="2" fill="#f09a18" /><rect x="4" y="4" width="14" height="17" fill="#f8ecc8" /><path d="M6 9h10M6 12h10M6 15h8" stroke="#a07020" /><path d="M21 2L12 14" stroke="#d84010" strokeWidth="2" /></TaskIcon>
        <span className="ml-[21px] text-[13px] text-[#d0d0d0] shrink-0">链接</span>
        <div className="ml-[16px] w-[52px] flex flex-col items-center leading-[18px] text-[13px] text-[#e8e8e8] shrink-0"><span>20%</span><span className="whitespace-nowrap">CPU使用</span></div>
        <ChevronUp size={18} className="ml-[16px] text-white shrink-0" />
        <svg viewBox="0 0 16 14" className="ml-[8px] w-[16px] h-[14px] shrink-0"><path d="M3 0v3M8 0v3" stroke="#fff" /><rect x="1" y="3" width="9" height="5" fill="#fff" /><rect x="5" y="7" width="11" height="6" fill="#ddd" /></svg>
        <Wifi size={17} className="ml-[8px] text-[#ccc] shrink-0" />
        <Volume2 size={16} className="ml-[5px] text-[#ddd] shrink-0" />
        <Keyboard size={22} strokeWidth={1} className="ml-[6px] text-white shrink-0" />
        <span className="ml-[10px] text-[14px] font-bold shrink-0">中</span>
        <div className="ml-[14px] w-[15px] h-[19px] rounded-[4px] bg-[#ee4c1c] flex items-center justify-center -rotate-6 text-[13px] font-bold leading-none shrink-0">S</div>
        <div className="ml-[21px] w-[58px] flex flex-col items-center leading-[18px] text-[13px] text-[#e8e8e8] shrink-0"><span>11:11</span><span>2018/3/7</span></div>
        <MessageSquare size={20} strokeWidth={1.300} className="ml-[24px] text-white shrink-0" />
      </div>
      <div className="absolute bottom-0 left-[692px] flex h-[2px]">
        <div className="w-[29px] bg-[#76b9ed]" /><div className="w-[28px] ml-[9px] bg-[#76b9ed]" /><div className="w-[28px] ml-[14px] bg-[#76b9ed]" /><div className="w-[28px] ml-[15px] bg-[#76b9ed]" /><div className="w-[41px] ml-[10px] bg-[#76b9ed]" /><div className="w-[29px] ml-[5px] bg-[#76b9ed]" />
      </div>

      {/* 盖在上面的：徽标、红圈、输入法条 */}
      <div className="absolute left-[1148px] -top-[27px] w-[46px] h-[46px] rounded-full bg-[#3cc060] border-[2px] border-[#b8c8b8] flex items-end justify-center pb-[2px] text-white text-[12px] font-bold">75</div>
      <svg viewBox="0 0 226 128" className="absolute left-[658px] top-[501px] w-[226px] h-[128px] pointer-events-none" fill="none"><ellipse cx="113" cy="64.500" rx="104" ry="56.500" stroke="#ff0000" strokeWidth="9" /></svg>
      <div className="absolute left-[1160px] top-[606px] flex items-center">
        <div className="w-[23px] h-[27px] rounded-[5px] bg-[#ee5a20] text-white flex items-center justify-center text-[20px] font-bold -rotate-6 z-10">S</div>
        <div className="flex items-center w-[183px] h-[24px] mt-[3px] bg-[#f4f8fc] border border-[#c8d8e8] text-[#1c70c0] pl-[10px]">
          <span className="text-[14px] font-bold">英</span>
          <span className="ml-[4px] w-[22px] text-[14px] font-bold">•,</span>
          <Smile size={16} className="ml-[0px]" />
          <Mic size={16} className="ml-[6px]" />
          <Keyboard size={18} className="ml-[5px]" />
          <span className="ml-[7px] w-[14px] h-[14px] rounded-t-full bg-[#b8c8d8] shrink-0" />
          <Shirt size={16} fill="#1c70c0" className="ml-[5px]" />
          <Wrench size={16} fill="#1c70c0" className="ml-[6px]" />
        </div>
      </div>
    </div>
  );
}
